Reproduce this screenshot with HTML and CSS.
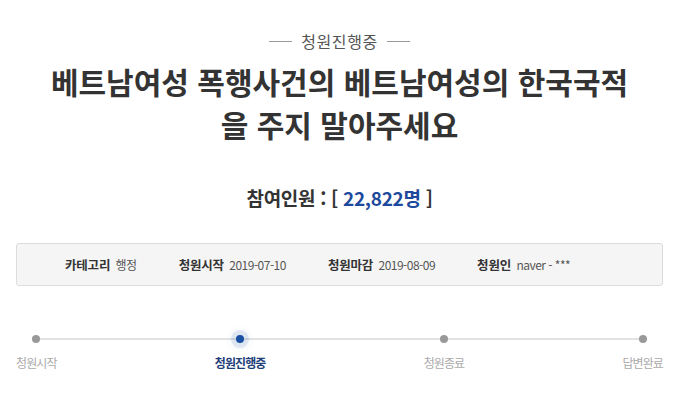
FILE: index.html
```html
<!DOCTYPE html>
<html lang="ko">
<head>
    <meta charset="UTF-8">
    <meta name="viewport" content="width=device-width, initial-scale=1.0">
    <title>청원 상세</title>
    <link rel="stylesheet" href="styles.css">
</head>
<body>
    <div class="petition">
        <div class="status-tag">청원진행중</div>
        <h1 class="petition-title">베트남여성 폭행사건의 베트남여성의 한국국적<br>을 주지 말아주세요</h1>
        <p class="petition-count">참여인원 : [ <span class="count-num">22,822명</span> ]</p>

        <ul class="petition-info">
            <li><b>카테고리</b> <span>행정</span></li>
            <li><b>청원시작</b> <span>2019-07-10</span></li>
            <li><b>청원마감</b> <span>2019-08-09</span></li>
            <li><b>청원인</b> <span>naver - ***</span></li>
        </ul>

        <ol class="progress">
            <li class="step"><i class="dot"></i><span>청원시작</span></li>
            <li class="step active"><i class="dot"></i><span>청원진행중</span></li>
            <li class="step"><i class="dot"></i><span>청원종료</span></li>
            <li class="step"><i class="dot"></i><span>답변완료</span></li>
        </ol>
    </div>
</body>
</html>
```

FILE: styles.css
```css
body {
    margin: 0;
    font-family: "Noto Sans CJK KR", "Noto Sans", sans-serif;
    background-color: #fff;
    color: #333;
}
.petition {
    padding: 0 17px 0 16px;
}
.status-tag {
    display: flex;
    justify-content: center;
    align-items: center;
    gap: 9px;
    margin-top: 30px;
    font-size: 16px;
    line-height: 22px;
    letter-spacing: 0.6px;
    color: #555;
}
.status-tag::before,
.status-tag::after {
    content: "";
    width: 23px;
    height: 1px;
    background-color: #999;
}
.petition-title {
    margin: 8px 0 0;
    text-align: center;
    font-size: 30px;
    font-weight: bold;
    line-height: 43px;
    letter-spacing: 0;
    color: #333;
}
.petition-count {
    margin: 39px 0 0;
    text-align: center;
    font-size: 19px;
    font-weight: bold;
    line-height: 26px;
    letter-spacing: -0.3px;
    color: #333;
}
.count-num {
    color: #1d4a9c;
}
.petition-info {
    display: flex;
    gap: 42px;
    list-style: none;
    margin: 32px 0 0;
    padding: 0 0 0 48px;
    height: 41px;
    align-items: center;
    background-color: #f5f5f5;
    border: 1px solid #dcdcdc;
    border-radius: 3px;
    font-size: 12px;
}
.petition-info b {
    font-size: 12.5px;
    letter-spacing: -0.2px;
    color: #333;
    margin-right: 2px;
}
.petition-info span {
    letter-spacing: -0.5px;
    color: #555;
}
.progress {
    position: relative;
    display: flex;
    justify-content: space-between;
    list-style: none;
    margin: 48px 0 0;
    padding: 0;
}
/* connecting line between the first and last dot */
.progress::before {
    content: "";
    position: absolute;
    top: 4px;
    left: 21px;
    right: 22px;
    height: 2px;
    background-color: #e2e2e2;
}
.step {
    position: relative;
    display: flex;
    flex-direction: column;
    align-items: center;
    gap: 10px;
    font-size: 12px;
    line-height: 20px;
    letter-spacing: -0.9px;
    color: #aaa;
}
.dot {
    width: 8px;
    height: 8px;
    margin-top: 1px;
    border-radius: 50%;
    background-color: #999;
}
.step.active {
    color: #1f3f7a;
    font-weight: bold;
}
.step.active .dot {
    background-color: #1a4fa3;
    box-shadow: 0 0 0 5px rgba(26, 79, 163, 0.1), 0 0 6px 6px rgba(26, 79, 163, 0.06);
}
```
